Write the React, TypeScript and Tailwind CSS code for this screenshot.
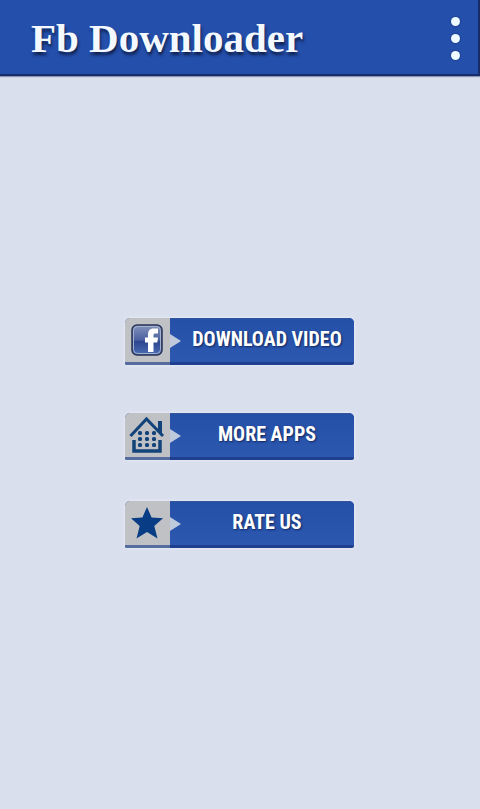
import type { ReactNode } from 'react';

function FacebookIcon() {
  return (
    <svg viewBox="0 0 32 32" className="size-8" aria-hidden="true">
      <defs>
        <linearGradient id="fbFill" x1="0" y1="0" x2="0" y2="1">
          <stop offset="0" stopColor="#8493bd" />
          <stop offset="0.5" stopColor="#4c629f" />
          <stop offset="0.55" stopColor="#2c468f" />
          <stop offset="1" stopColor="#4b6db4" />
        </linearGradient>
      </defs>
      <rect x="1" y="1" width="30" height="30" rx="5" fill="url(#fbFill)" stroke="#293459" strokeWidth="1.5" />
      <rect x="2.5" y="2.5" width="27" height="27" rx="4" fill="none" stroke="#a5b0cd" strokeWidth="1" />
      <path
        d="M17 28V18.5H14V13.5H17V11C17 6.5 19 4.5 22.5 4.5H27V9.5H24.5C23 9.5 22.5 10 22.5 11.5V13.5H27L26.3 18.5H22.5V28Z"
        fill="#fff"
      />
    </svg>
  );
}

function HouseIcon() {
  return (
    <svg viewBox="0 0 36 38" className="h-[38px] w-9" fill="none" stroke="#12437a" aria-hidden="true">
      <path d="M1.5 20L17.5 3L34 20" strokeWidth="3" />
      <path d="M31 5V17" strokeWidth="4" />
      <path d="M5 24V35H31V24" strokeWidth="3.5" />
      <g fill="#12437a" stroke="none">
        {[17, 23, 29].map((y) =>
          [11, 18, 25].map((x) => <rect key={`${x}-${y}`} x={x - 2} y={y - 2} width="4" height="4" rx="1.5" />),
        )}
      </g>
    </svg>
  );
}

function StarIcon() {
  return (
    <svg viewBox="0 0 32 34" className="h-[34px] w-8" aria-hidden="true">
      <path d="M16 1L20.6 11.6L32 12.2L23.3 20L26.5 32.5L16 26L5.5 32.5L8.7 20L0 12.2L11.4 11.6Z" fill="#083c84" />
    </svg>
  );
}

function MenuButton({ icon, children }: { icon: ReactNode; children: ReactNode }) {
  return (
    <button
      type="button"
      className="flex h-[47px] w-[229px] flex-col overflow-hidden rounded-t-[5px] rounded-b-[2px] bg-[#1f3f91] shadow-[0_0_3px_#eef2fb]"
    >
      <span className="flex h-11 w-full">
        <span className="flex w-[45px] items-center justify-center bg-[#bfc1c4]">{icon}</span>
        <span className="flex flex-1 items-center border-t border-[#31549f] bg-linear-to-b from-[#2450a8] to-[#2d58b0]">
          <svg viewBox="0 0 11 14" className="h-3.5 w-[11px]" aria-hidden="true">
            <path d="M0 0L11 7L0 14Z" fill="#bfc9dc" />
          </svg>
          <span className="flex-1 pb-1 text-center font-['Liberation_Sans_Narrow','Roboto_Condensed','Liberation_Sans',sans-serif] text-xl leading-6 font-bold whitespace-nowrap text-white [text-shadow:1px_1px_2px_#10245c]">
            {children}
          </span>
        </span>
      </span>
      <span className="flex h-[3px] w-full">
        <span className="w-[45px] bg-[#566b9e]" />
      </span>
    </button>
  );
}

export default function App() {
  return (
    <div className="min-h-screen bg-[#d9dfed]">
      <header className="flex h-[76px] items-center justify-between border-r-2 border-b-2 border-[#172c69] bg-[#244fab] pt-0.5 pr-[18px] pl-[31px] shadow-[0_1px_1px_#8b96b7]">
        <h1 className="font-['Liberation_Serif',serif] text-[41px] leading-[48px] font-bold whitespace-nowrap text-[#f3f9ff] [text-shadow:1px_3px_3px_#10204c]">
          Fb Downloader
        </h1>
        <button type="button" aria-label="Menu" className="flex flex-col gap-2">
          <span className="size-[9px] rounded-full bg-[#edfaff] shadow-[0_0_2px_#122b69]" />
          <span className="size-[9px] rounded-full bg-[#edfaff] shadow-[0_0_2px_#122b69]" />
          <span className="size-[9px] rounded-full bg-[#edfaff] shadow-[0_0_2px_#122b69]" />
        </button>
      </header>
      <main className="flex flex-col items-center pt-[242px] pr-0.5 pb-8">
        <MenuButton icon={<FacebookIcon />}>DOWNLOAD VIDEO</MenuButton>
        <div className="mt-12 flex flex-col gap-[41px]">
          <MenuButton icon={<HouseIcon />}>MORE APPS</MenuButton>
          <MenuButton icon={<StarIcon />}>RATE US</MenuButton>
        </div>
      </main>
    </div>
  );
}
